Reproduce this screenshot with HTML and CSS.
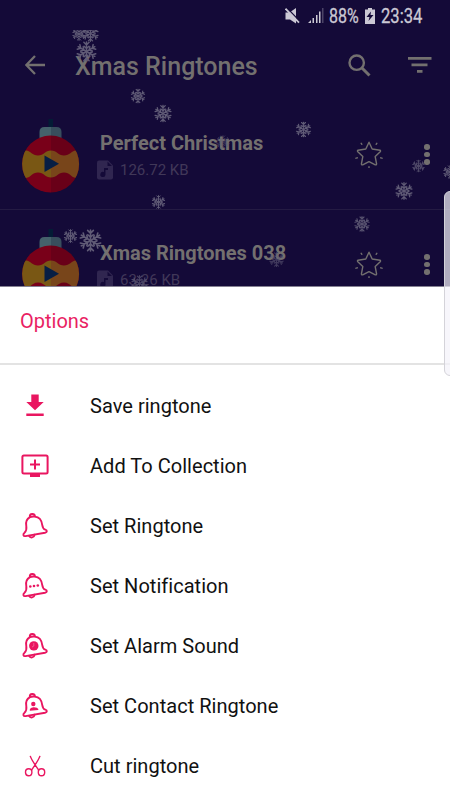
FILE: index.html
```html
<!DOCTYPE html>
<html lang="en">
<head>
<meta charset="utf-8">
<title>Xmas Ringtones</title>
<link rel="stylesheet" href="styles.css">
</head>
<body>
<svg class="defs" aria-hidden="true">
  <symbol id="flake" viewBox="-12 -12 24 24">
    <g fill="none" stroke="currentColor" stroke-width="1.700" stroke-linecap="round">
      <g id="arm"><path d="M0 0V-11M-3-10.500L0-7.500L3-10.500M-2.800-6L0-3.500L2.800-6"/></g>
      <use href="#arm" transform="rotate(60)"/><use href="#arm" transform="rotate(120)"/>
      <use href="#arm" transform="rotate(180)"/><use href="#arm" transform="rotate(240)"/>
      <use href="#arm" transform="rotate(300)"/>
    </g>
  </symbol>
  <symbol id="bauble" viewBox="0 0 58 76">
    <path fill="#031c35" d="M26.500 2h4.500v9h-4.500z"/>
    <path fill="#45616b" d="M17.500 21v-6q0-5 5-5H29V21z"/>
    <path fill="#384e5d" d="M29 10h5.500q5 0 5 5V21H29z"/>
    <clipPath id="ball"><circle cx="28.600" cy="47" r="28.500"/></clipPath>
    <g clip-path="url(#ball)">
      <path fill="#790019" d="M0 17h29v60H0z"/><path fill="#690018" d="M29 17h30v60H29z"/>
      <path fill="#795714" d="M0 33.500H4C9 34 10 38.500 16 38.500C22 38.500 23 33.500 29 33.500V60.500C23 60.500 22 55.500 16 55.500C10 55.500 9 60.500 4 61H0z"/>
      <path fill="#78451a" d="M29 33.500C35 33.500 36 38.500 42 38.500C48 38.500 49 34 54 33.500H59V61H54C49 60.500 48 55.500 42 55.500C36 55.500 35 60.500 29 60.500z"/>
    </g>
    <path fill="#071e44" d="M22.500 38.500L37 46.700L22.500 55z"/>
  </symbol>
  <symbol id="file" viewBox="0 0 16 20">
    <path fill="#302650" d="M2 .5h9l5 5v12q0 2-2 2H2q-2 0-2-2v-15q0-2 2-2z"/>
    <path fill="#140a38" d="M10.500 1.500v4.500h4.500zM7 8h4v2H8.500v4.500a2.600 2.600 0 1 1-1.500-2.400z"/>
  </symbol>
  <symbol id="star" viewBox="0 0 28 28">
    <g fill="none" stroke="currentColor" stroke-width="1.400" stroke-linejoin="round" stroke-linecap="round">
      <path d="M14 2.200L17.200 9L25 10.200Q26 10.700 25.200 11.700L20.200 16.600L21.600 24Q21.500 25.200 20.300 24.800L14 21.600L7.700 24.800Q6.500 25.200 6.400 24L7.800 16.600L2.800 11.700Q2 10.700 3 10.200L10.800 9z"/>
      <path d="M6.200 3.300l.7 1M21.800 3.300l-.7 1M1 18.200l1.300-.4M27 18.200l-1.300-.4M14 26.600v1"/>
    </g>
  </symbol>
  <symbol id="bell" viewBox="0 0 28 28">
    <g fill="none" stroke="currentColor" stroke-width="1.900" stroke-linejoin="round" stroke-linecap="round">
      <path d="M9 5.100C5.500 7 4.500 10.500 5.300 14.200C5.800 17.500 5.300 19.200 3.500 20.800C1.500 22.500 2.300 24.500 4.600 24.100L24 20.700C26.500 20.200 26.300 18.300 24.300 17.700C22 17 21.600 15.200 21.200 12.800C20.600 8 18 5 13.800 4.600C12 4.400 10.600 4.500 9 5.100z"/>
      <path d="M8.800 4.800C8.600 1.300 13.500 1 14 4.300M8 23.800C9.300 26.400 13.200 25.700 13.500 22.800"/>
    </g>
  </symbol>
</svg>

<div class="screen">
  <header class="status">
    <svg class="mute" viewBox="0 0 15 16"><path fill="currentColor" d="M.5 4.500h4L11 0v15.500L5 11.500H.5z"/><path d="M1.500-.5l14 14.500" stroke="#140a38" stroke-width="1.300"/><path d="M.5 .7l13.500 14" stroke="currentColor" stroke-width="1.700"/></svg>
    <svg class="signal" viewBox="0 0 16 15"><path fill="currentColor" d="M0 15l3-3v3zM4.500 10h1.500v5H4.500zM8 7h1.500v8H8zM11 3.500h1.500V15H11z"/><path fill="#4b4367" d="M14 0h1.500v15H14z"/></svg>
    <span class="percent"><span class="narrow">88%</span></span>
    <svg class="battery" viewBox="0 0 10 16"><path fill="currentColor" d="M3 0h4v1.500h3V16H0V1.500h3z"/><path fill="#140a38" d="M6 3.500L1.500 9h3L3.500 13L8.500 7H5.500z"/></svg>
    <span class="clock"><span class="narrow">23:34</span></span>
  </header>

  <nav class="appbar">
    <svg class="back" viewBox="0 0 20 20"><path d="M20 10H1.500M10 1L1.300 10L10 19" fill="none" stroke="currentColor" stroke-width="2.300"/></svg>
    <h1>Xmas Ringtones</h1>
    <svg class="search" viewBox="0 0 23 23"><circle cx="8.700" cy="8.700" r="7.200" fill="none" stroke="currentColor" stroke-width="2.400"/><path d="M14 14l7.500 7.500" stroke="currentColor" stroke-width="3"/></svg>
    <svg class="filter" viewBox="0 0 24 16"><path fill="currentColor" d="M0 0h23.500v2.700H0zM3.500 6.500h16v2.700h-16zM9 13h5.500v2.700H9z"/></svg>
  </nav>

  <main>
    <article class="track">
      <svg class="bauble"><use href="#bauble"/></svg>
      <div class="info">
        <h2>Perfect Christmas</h2>
        <p><svg class="file"><use href="#file"/></svg>126.72 KB</p>
      </div>
      <svg class="star"><use href="#star"/></svg>
      <div class="more"><i></i><i></i><i></i></div>
    </article>
    <article class="track">
      <svg class="bauble"><use href="#bauble"/></svg>
      <div class="info">
        <h2>Xmas Ringtones 038</h2>
        <p><svg class="file"><use href="#file"/></svg>63.26 KB</p>
      </div>
      <svg class="star"><use href="#star"/></svg>
      <div class="more"><i></i><i></i><i></i></div>
    </article>
  </main>

  <svg class="snow" viewBox="0 30 450 256">
    <use href="#flake" x="72" y="27" width="14" height="14"/>
    <use href="#flake" x="82" y="25" width="17" height="17"/>
    <use href="#flake" x="76" y="41" width="21" height="21"/>
    <use href="#flake" x="130.500" y="88.500" width="15" height="15"/>
    <use href="#flake" x="154" y="104.500" width="18" height="18"/>
    <use href="#flake" x="151.500" y="195" width="14" height="14"/>
    <use href="#flake" x="295.500" y="121.500" width="16" height="16"/>
    <use href="#flake" x="216" y="135" width="14" height="14" opacity=".5"/>
    <use href="#flake" x="412" y="159.500" width="13" height="13" opacity=".8"/>
    <use href="#flake" x="395" y="182" width="18" height="18"/>
    <use href="#flake" x="443" y="165" width="14" height="14"/>
    <use href="#flake" x="354" y="216" width="16" height="16" opacity=".9"/>
    <use href="#flake" x="63.500" y="229" width="14" height="14"/>
    <use href="#flake" x="79" y="229" width="23" height="23"/>
    <use href="#flake" x="269" y="252" width="15" height="15" opacity=".6"/>
    <use href="#flake" x="131" y="275" width="17" height="17" opacity=".7"/>
  </svg>

  <section class="sheet">
    <h3>Options</h3>
    <ul>
      <li><svg class="icon" viewBox="0 0 28 28"><path fill="currentColor" d="M10.300 2.500h7.400v7.500h5L14 18.300L5.300 10h5zM5.300 21.500h17.400v2.400H5.300z"/></svg>Save ringtone</li>
      <li><svg class="icon" viewBox="0 0 28 28"><rect x="1.400" y="3.500" width="25.200" height="18" rx="1.500" fill="none" stroke="currentColor" stroke-width="2"/><path fill="currentColor" d="M9 21.500h10V25H9zM13 7.500h2v4h4v2h-4v4h-2v-4H9v-2h4z"/></svg>Add To Collection</li>
      <li><svg class="icon"><use href="#bell"/></svg>Set Ringtone</li>
      <li><svg class="icon" viewBox="0 0 28 28"><use href="#bell" width="28" height="28"/><g fill="currentColor"><circle cx="9.300" cy="14.500" r="1.300"/><circle cx="13" cy="14" r="1.300"/><circle cx="16.800" cy="13.500" r="1.300"/></g></svg>Set Notification</li>
      <li><svg class="icon" viewBox="0 0 28 28"><use href="#bell" width="28" height="28"/><circle cx="12.800" cy="13.900" r="4.700" fill="currentColor"/><path d="M12.800 11v3l-1.800 1" stroke="#f27aa5" stroke-width=".7" fill="none"/></svg>Set Alarm Sound</li>
      <li><svg class="icon" viewBox="0 0 28 28"><use href="#bell" width="28" height="28"/><circle cx="12.300" cy="12" r="2.200" fill="currentColor"/><path d="M8.800 18.800v-1.300q.4-2 3.500-2.300q4.200-.2 5 1.700v1z" fill="currentColor"/></svg>Set Contact Ringtone</li>
      <li><svg class="icon" viewBox="0 0 28 28"><g fill="none" stroke="currentColor" stroke-width="1.400"><ellipse cx="7.700" cy="20.200" rx="3.200" ry="3.500"/><ellipse cx="20.500" cy="20.200" rx="3.200" ry="3.500"/><path d="M9.200 3.800C10 7 12.500 10.500 17.700 18.300M19 3.800C18.200 7 15.700 10.500 10.500 18.300"/></g></svg>Cut ringtone</li>
    </ul>
  </section>
  <div class="edge-panel"></div>
</div>
</body>
</html>
```
FILE: styles.css
```css
* { box-sizing: border-box; }
body, h1, h2, h3, p, ul { margin: 0; padding: 0; }
body { font-family: Roboto, "Liberation Sans", sans-serif; }
svg { display: block; flex: none; }
.defs { position: absolute; width: 0; height: 0; }

.screen {
  position: relative;
  width: 450px;
  height: 800px;
  overflow: hidden;
  background: #140a38;
  color: #73706f;
  display: flex;
  flex-direction: column;
}

.status {
  height: 30px;
  flex: none;
  display: flex;
  align-items: center;
  padding: 1px 27px 0 0;
  justify-content: flex-end;
  color: #cbc8d4;
  font-size: 20px;
  line-height: 28px;
}
.mute { width: 15px; height: 16px; margin-right: 8px; }
.signal { width: 16px; height: 15px; margin-right: 5px; }
.percent { width: 32px; }
.clock { width: 42px; }
.narrow { display: block; transform: scaleX(.83); transform-origin: left; -webkit-text-stroke: .3px; }
.percent .narrow { transform: scaleX(.8); }
.battery { width: 10px; height: 16px; margin: 0 6px 0 4px; }

.appbar {
  height: 70px;
  flex: none;
  display: flex;
  align-items: center;
  padding: 0 18px 0 25px;
}
.back { width: 20px; height: 20px; }
h1 {
  flex: 1;
  margin-left: 30px;
  font-size: 25px;
  font-weight: 500;
  line-height: 32px;
  padding-top: 3px;
}
.search { width: 23px; height: 23px; margin-right: 37px; }
.filter { width: 24px; height: 16px; }

main { height: 186px; flex: none; overflow: hidden; }
.track {
  height: 110px;
  display: flex;
  align-items: flex-start;
  padding-left: 21.500px;
  border-bottom: 1px solid #241b43;
}
.bauble { width: 58px; height: 76px; margin-top: 17px; }
.info { width: 258px; margin-left: 16.500px; padding-top: 30px; }
h2 { padding-left: 4px; font-size: 20px; font-weight: 700; line-height: 26px; }
.info p {
  display: flex;
  align-items: center;
  gap: 7px;
  height: 28px;
  padding-left: 1px;
  font-size: 15px;
  color: #413858;
}
.file { width: 16px; height: 20px; }
.star { width: 28px; height: 28px; margin-top: 40px; margin-left: 1px; }
.more { display: flex; flex-direction: column; gap: 2px; margin: 44px 0 0 41px; }
.more i { width: 5.500px; height: 5.500px; border-radius: 50%; background: currentColor; }

.snow { position: absolute; left: 0; top: 30px; width: 450px; height: 256px; color: #605b76; }

.sheet {
  position: relative;
  flex: 1;
  background: #fff;
  color: #111;
  border-top: 1px solid #858192;
}
h3 {
  height: 78px;
  padding: 20px 20px 0;
  border-bottom: 2px solid #e3e3e3;
  color: #e91e63;
  font-size: 20px;
  font-weight: 400;
  line-height: 28px;
}
ul { list-style: none; padding-top: 11px; }
li {
  display: flex;
  align-items: center;
  height: 60px;
  padding: 0 21px;
  gap: 41px;
  font-size: 20px;
  letter-spacing: .03px;
}
.icon { width: 28px; height: 28px; color: #e91660; }

.edge-panel {
  position: absolute;
  top: 191px;
  left: 444px;
  width: 12px;
  height: 185px;
  border: 1px solid #d4d3d9;
  border-radius: 6px;
  background: rgba(244, 242, 250, .7);
}
```
